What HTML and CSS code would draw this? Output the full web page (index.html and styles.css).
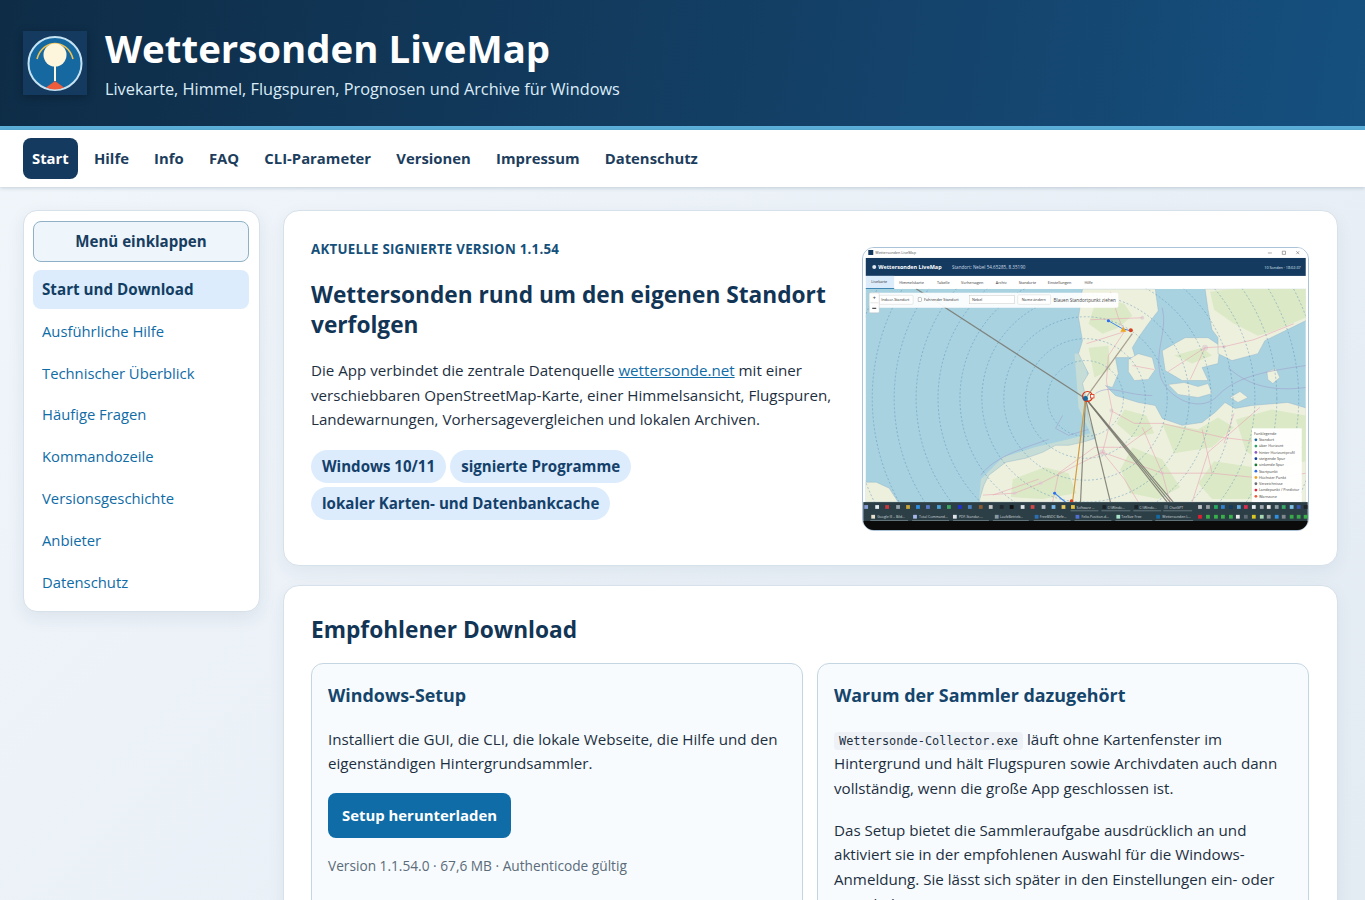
FILE: index.html
```html
<!DOCTYPE html>
<html lang="de">
<head>
    <meta charset="UTF-8">
    <title>Wettersonden LiveMap</title>
    <link rel="stylesheet" href="styles.css">
</head>
<body>

    <!-- Page Header -->
    <header class="page-header">
        <svg class="logo" viewBox="0 0 64 64" aria-label="Logo">
            <rect width="64" height="64" fill="#143a5f"/>
            <circle cx="32" cy="32.500" r="26.500" fill="#1569a0" stroke="#c4e2f2" stroke-width="2"/>
            <path d="M14 28 C17 17 25 12.500 32 12.500 C39 12.500 47 17 50 28" fill="none" stroke="#f2c14e" stroke-width="1.600"/>
            <circle cx="32" cy="24" r="11.500" fill="#fdf6dc"/>
            <rect x="31" y="34" width="2" height="16" fill="#fdf6dc"/>
            <path d="M23 56.500 L32 50 L41 56.500 C35 59 29 59 23 56.500 Z" fill="#ee5c3c"/>
        </svg>
        <div>
            <h1>Wettersonden LiveMap</h1>
            <p>Livekarte, Himmel, Flugspuren, Prognosen und Archive für Windows</p>
        </div>
    </header>

    <!-- Top Navigation -->
    <nav class="top-nav">
        <a class="active" href="#">Start</a>
        <a href="#">Hilfe</a>
        <a href="#">Info</a>
        <a href="#">FAQ</a>
        <a href="#">CLI-Parameter</a>
        <a href="#">Versionen</a>
        <a href="#">Impressum</a>
        <a href="#">Datenschutz</a>
    </nav>

    <div class="layout">

        <!-- Side Menu -->
        <aside class="side-menu">
            <button class="collapse-btn">Menü einklappen</button>
            <a class="active" href="#">Start und Download</a>
            <a href="#">Ausführliche Hilfe</a>
            <a href="#">Technischer Überblick</a>
            <a href="#">Häufige Fragen</a>
            <a href="#">Kommandozeile</a>
            <a href="#">Versionsgeschichte</a>
            <a href="#">Anbieter</a>
            <a href="#">Datenschutz</a>
        </aside>

        <main class="content">

            <!-- Intro -->
            <section class="card hero">
                <div>
                    <div class="eyebrow">AKTUELLE SIGNIERTE VERSION 1.1.54</div>
                    <h2 class="hero-title">Wettersonden rund um den eigenen Standort verfolgen</h2>
                    <p>Die App verbindet die zentrale Datenquelle <a href="#">wettersonde.net</a> mit einer verschiebbaren OpenStreetMap-Karte, einer Himmelsansicht, Flugspuren, Landewarnungen, Vorhersagevergleichen und lokalen Archiven.</p>
                    <div class="pills">
                        <span>Windows 10/11</span>
                        <span>signierte Programme</span>
                        <span>lokaler Karten- und Datenbankcache</span>
                    </div>
                </div>

                <svg class="shot" viewBox="0 0 446 283" aria-label="Programmfenster mit Karte">
                    <rect width="446" height="283" fill="#fff"/>
                    <!-- title bar -->
                    <rect x="5" y="2" width="5" height="5" fill="#143a5f"/>
                    <text x="12" y="6.200" class="t4" fill="#555">Wettersonden LiveMap</text>
                    <path d="M406 5h4M420.500 3.200h3.200v3.200h-3.200zM434.500 3.200l3 3M437.500 3.200l-3 3" fill="none" stroke="#555" stroke-width=".5"/>
                    <!-- app header -->
                    <rect x="2.500" y="10" width="441.500" height="18" fill="#143a5f"/>
                    <circle cx="11" cy="19" r="2" fill="#dfe8f0"/>
                    <text x="15" y="21" class="t6b" fill="#fff">Wettersonden LiveMap</text>
                    <text x="89" y="21" class="t45" fill="#c9d8e4">Standort: Nebel 54.65285, 8.35190</text>
                    <text x="439" y="21" class="t4" fill="#dfe8f0" text-anchor="end">10 Sonden · 18:02:37</text>
                    <!-- tabs -->
                    <rect x="2.500" y="28" width="28.500" height="13" fill="#dcecfb"/>
                    <rect x="2.500" y="40.300" width="28.500" height=".8" fill="#1569a0"/>
                    <g class="t4" fill="#333">
                        <text x="8" y="35">Livekarte</text>
                        <text x="36" y="36">Himmelskarte</text>
                        <text x="74" y="36">Tabelle</text>
                        <text x="98" y="36">Vorhersagen</text>
                        <text x="133" y="36">Archiv</text>
                        <text x="156" y="36">Standorte</text>
                        <text x="185" y="36">Einstellungen</text>
                        <text x="222" y="36">Hilfe</text>
                    </g>
                    <!-- map -->
                    <svg x="2.500" y="41" width="441.500" height="214" viewBox="2.500 41 441.500 214">
                        <rect x="0" y="41" width="446" height="214" fill="#a9d2e0"/>
                        <!-- tidal flats -->
                        <path d="M116 255 L118 232 L140 210 L172 200 L206 192 L228 186 L216 160 L214 132 L212 106 L222 106 L232 190 L200 206 L150 222 L128 240 L124 255 Z" fill="#c5ddd6"/>
                        <!-- land -->
                        <g fill="#eef0de" stroke="#8eb0c8" stroke-width=".4">
                            <path d="M220 41 L293 41 L296 63 L286 76 L276 90 L270 100 L273 110 L253 110 L256 126 L250 140 L243 138 L253 148 L276 155 L293 158 L300 171 L320 178 L340 175 L353 165 L363 155 L373 161 L390 158 L426 155 L446 161 L446 255 L116 255 L121 238 L126 228 L143 215 L163 211 L180 205 L193 198 L206 198 L220 195 L233 191 L226 171 L223 148 L220 136 L226 126 L216 106 L220 93 L216 70 Z"/>
                            <path d="M266 112 L276 106 L290 110 L293 122 L286 132 L272 133 L266 124 Z"/>
                            <path d="M300 103 L323 90 L346 90 L358 98 L356 116 L340 120 L346 133 L320 133 L303 123 Z"/>
                            <path d="M306 137 L322 135 L336 139 L346 136 L350 146 L336 150 L316 147 Z"/>
                            <path d="M343 41 L446 41 L446 72 L403 93 L396 106 L370 113 L356 106 L356 90 L350 82 L346 62 Z"/>
                            <path d="M405 124 L414 121 L418 130 L411 136 L406 132 Z"/>
                            <path d="M2 255 L2 235 L13 235 L26 241 L35 255 Z"/>
                            <path d="M368 150 L378 144 L386 150 L376 155 Z"/>
                        </g>
                        <!-- woodland -->
                        <g fill="#dbe9c6">
                            <path d="M348 44 L372 41 L444 41 L444 70 L410 84 L396 88 L372 76 L352 62 Z"/>
                            <path d="M232 58 L246 52 L262 56 L270 68 L256 80 L240 86 L226 76 Z"/>
                            <path d="M226 100 L246 98 L248 122 L232 130 Z"/>
                            <path d="M300 176 L336 182 L356 170 L372 180 L350 200 L312 206 Z"/>
                            <path d="M374 172 L410 162 L444 168 L444 214 L412 222 L384 204 Z"/>
                            <path d="M352 214 L392 220 L420 232 L400 252 L350 252 L336 236 Z"/>
                            <path d="M270 200 L300 212 L318 240 L296 252 L268 246 L258 222 Z"/>
                            <path d="M150 232 L182 220 L206 226 L214 246 L180 252 L148 250 Z"/>
                            <path d="M262 162 L284 168 L292 186 L270 190 L254 176 Z"/>
                            <path d="M312 108 L340 100 L350 108 L330 116 Z"/>
                        </g>
                        <!-- towns -->
                        <g fill="#e0d8d4">
                            <circle cx="343" cy="100" r="3"/>
                            <circle cx="362" cy="99" r="1.800"/>
                            <circle cx="249" cy="163" r="2"/>
                            <circle cx="240" cy="205" r="3"/>
                            <circle cx="300" cy="226" r="2"/>
                            <circle cx="178" cy="236" r="2"/>
                            <circle cx="152" cy="246" r="2"/>
                            <circle cx="280" cy="70" r="2"/>
                            <circle cx="244" cy="120" r="1.500"/>
                            <circle cx="410" cy="232" r="2"/>
                        </g>
                        <!-- roads -->
                        <g fill="none" stroke="#e7a6b5" stroke-width=".6">
                            <path d="M248 44 L256 70 L262 84 L246 108 L244 134 L250 164 L244 190 L240 205 L262 232 L276 255"/>
                            <path d="M250 164 L272 176 L300 176 L360 190 L440 200"/>
                            <path d="M120 248 L152 246 L178 236 L240 205 L300 226 L350 226 L410 232 L444 226"/>
                            <path d="M190 255 L196 226 L232 200 L262 200 L290 180"/>
                            <path d="M270 118 L292 122 M306 124 L343 100 L362 99 M343 100 L328 132"/>
                            <path d="M330 255 L346 205 L398 160 M176 232 L130 248 M362 99 L392 92 L432 76"/>
                            <path d="M228 72 L280 70 M224 96 L262 84 M300 226 L308 255 M410 232 L404 255"/>
                            <path d="M362 196 L372 166 M280 180 L300 226 M340 182 L350 226"/>
                        </g>
                        <!-- sea boundaries -->
                        <g fill="none" stroke="#9ea3cc" stroke-width=".6">
                            <path d="M200 168 L193 181 L206 188 L226 182"/>
                            <path d="M300 60 C306 82 292 102 298 128 C304 150 336 166 354 150 C372 130 400 124 444 118"/>
                            <path d="M366 120 C378 130 398 146 444 140"/>
                            <path d="M233 146 C248 136 262 148 290 148"/>
                            <path d="M118 228 C132 208 170 198 186 192"/>
                        </g>
                        <!-- range rings -->
                        <g fill="none" stroke="#4f8db5" stroke-width=".45" stroke-dasharray="2 2">
                            <circle cx="223" cy="151" r="38"/>
                            <circle cx="223" cy="151" r="60"/>
                            <circle cx="223" cy="151" r="82"/>
                            <circle cx="223" cy="151" r="104"/>
                            <circle cx="223" cy="151" r="126"/>
                            <circle cx="223" cy="151" r="148"/>
                            <circle cx="223" cy="151" r="170"/>
                            <circle cx="223" cy="151" r="192"/>
                            <circle cx="223" cy="151" r="214"/>
                            <circle cx="223" cy="151" r="236"/>
                        </g>
                        <!-- bearing lines -->
                        <g fill="none" stroke="#77766c" stroke-width="1.200" stroke-opacity=".85">
                            <path d="M53 41 L223 151"/>
                            <path d="M270 86 L223 151" stroke="#9c9280"/>
                            <path d="M223 151 L218 255"/>
                            <path d="M223 151 L248 255"/>
                            <path d="M223 151 L305 255"/>
                            <path d="M223 151 L308 255"/>
                            <path d="M223 151 L311 255"/>
                        </g>
                        <path d="M223 151 L210 255" fill="none" stroke="#d49b3f" stroke-width="1.200"/>
                        <!-- tracks and markers -->
                        <path d="M246 73 L260 81 L268 83" fill="none" stroke="#3f86f0" stroke-width="1"/>
                        <circle cx="246" cy="73" r="1.600" fill="#2f6fee"/>
                        <path d="M258 84 L261 79 L264 84 Z" fill="#f0a41b"/>
                        <circle cx="268.500" cy="82.500" r="2" fill="#d9401f"/>
                        <path d="M192 246 L204 256" fill="none" stroke="#3f86f0" stroke-width="1.200"/>
                        <circle cx="192" cy="246" r="1.500" fill="#2f6fee"/>
                        <circle cx="209" cy="254" r="1.800" fill="#d9401f"/>
                        <circle cx="225" cy="149" r="5" fill="none" stroke="#d9361a" stroke-width="1.200"/>
                        <rect x="228" y="147" width="3.500" height="3.500" fill="#fff" stroke="#d9361a" stroke-width=".8"/>
                        <circle cx="223" cy="151" r="2.500" fill="#1569a0"/>
                        <!-- toolbar -->
                        <rect x="6" y="45" width="250" height="15" rx="2" fill="#fff" fill-opacity=".93"/>
                        <rect x="16" y="47.500" width="34" height="9" rx="1" fill="#fff" stroke="#ccc" stroke-width=".4"/>
                        <text x="18" y="53.500" class="t4" fill="#333">Indoor-Standort</text>
                        <rect x="55" y="50" width="3.500" height="3.500" fill="#fff" stroke="#777" stroke-width=".4"/>
                        <text x="61" y="53.500" class="t4" fill="#333">Fahrender Standort</text>
                        <rect x="106.500" y="47.500" width="45" height="8.500" fill="#fff" stroke="#bbb" stroke-width=".4"/>
                        <text x="109" y="53.500" class="t4" fill="#333">Nebel</text>
                        <rect x="155" y="47" width="33" height="9.500" rx="1" fill="#fff" stroke="#ccc" stroke-width=".4"/>
                        <text x="159" y="53.500" class="t4" fill="#333">Name ändern</text>
                        <text x="191" y="53.800" class="t45" fill="#444">Blauen Standortpunkt ziehen</text>
                        <!-- zoom control -->
                        <rect x="6" y="45" width="10" height="20" rx="1" fill="#fff" stroke="#bbb" stroke-width=".4"/>
                        <path d="M7 55h8" stroke="#bbb" stroke-width=".4"/>
                        <text x="11" y="52" class="t6b" fill="#555" text-anchor="middle">+</text>
                        <path d="M9 60.500h4" stroke="#222" stroke-width="1"/>
                        <!-- legend -->
                        <rect x="390" y="181" width="50" height="76" fill="#fff" fill-opacity=".96"/>
                        <g class="t4" fill="#444">
                            <text x="392" y="187.500">Funklegende</text>
                            <text x="397" y="193.800">Standort</text>
                            <text x="397" y="200">über Horizont</text>
                            <text x="397" y="206.400">hinter Horizontprofil</text>
                            <text x="397" y="212.700">steigende Spur</text>
                            <text x="397" y="219">sinkende Spur</text>
                            <text x="397" y="225.300">Startpunkt</text>
                            <text x="397" y="231.600">Höchster Punkt</text>
                            <text x="397" y="238">Verzeichnisse</text>
                            <text x="397" y="244.200">Landepunkt / Predictor</text>
                            <text x="397" y="250.500">Warnzone</text>
                        </g>
                        <g>
                            <circle cx="394" cy="192.500" r="1.400" fill="#1569a0"/>
                            <circle cx="394" cy="198.800" r="1.400" fill="#2aa06a"/>
                            <circle cx="394" cy="205.100" r="1.400" fill="#8e5bc8"/>
                            <circle cx="394" cy="211.400" r="1.400" fill="#143f9e"/>
                            <circle cx="394" cy="217.700" r="1.400" fill="#1b7a35"/>
                            <circle cx="394" cy="224" r="1.400" fill="#2f6fee"/>
                            <circle cx="394" cy="230.300" r="1.400" fill="#f0a41b"/>
                            <circle cx="394" cy="236.600" r="1.400" fill="#6a6f76"/>
                            <circle cx="394" cy="242.900" r="1.400" fill="#e0273b"/>
                            <circle cx="394" cy="249.200" r="1.400" fill="#ee5c3c"/>
                        </g>
                    </svg>
                    <!-- taskbar -->
                    <rect y="255" width="446" height="28" fill="#2c3e46"/>
                    <rect y="274" width="446" height="9" fill="#0b0b0b"/>
                    <!-- taskbar, first row -->
                    <g class="row-a">
                        <rect x="1" fill="#8aa0d8"/><rect x="12" fill="#e8eef2"/><rect x="22" fill="#c8383c"/><rect x="33" fill="#9aa6ae"/>
                        <rect x="43" fill="#c9a63a"/><rect x="53" fill="#2f8fe0"/><rect x="63" fill="#5a7ac8"/><rect x="74" fill="#4aa0d8"/>
                        <rect x="84" fill="#3aa860"/><rect x="95" fill="#2030d0"/><rect x="105" fill="#4a80c0"/><rect x="116" fill="#8a5a30"/>
                        <rect x="126" fill="#c8c8c8"/><rect x="137" fill="#20282c"/><rect x="147" fill="#101010"/><rect x="158" fill="#e0e4e8"/>
                        <rect x="168" fill="#d04848"/><rect x="179" fill="#b8c4cc"/><rect x="189" fill="#78b8e8"/><rect x="199" fill="#e8c860"/>
                        <rect x="336" fill="#c0c4c8"/><rect x="344" fill="#9aa0a4"/><rect x="352" fill="#28a860"/><rect x="359" fill="#3080d0"/>
                        <rect x="367" fill="#143a5f"/><rect x="375" fill="#60a8e0"/><rect x="382" fill="#d83050"/><rect x="390" fill="#e8f0f4"/>
                        <rect x="398" fill="#a0a8b0"/><rect x="405" fill="#e8e8e8"/><rect x="413" fill="#90a0a8"/><rect x="420" fill="#38a868"/>
                        <rect x="428" fill="#80c0e8"/><rect x="435" fill="#3858b0"/><rect x="442" fill="#202428"/>
                    </g>
                    <!-- taskbar, second row -->
                    <g class="row-b">
                        <rect x="336" fill="#e02030"/><rect x="344" fill="#38b048"/><rect x="352" fill="#38b048"/><rect x="359" fill="#38b048"/>
                        <rect x="367" fill="#38b048"/><rect x="374" fill="#e8e8e8"/><rect x="382" fill="#606c74"/><rect x="390" fill="#d8c820"/>
                        <rect x="398" fill="#a8d8b0"/><rect x="405" fill="#889498"/><rect x="413" fill="#2f8fe0"/><rect x="420" fill="#808890"/>
                        <rect x="428" fill="#38a848"/><rect x="435" fill="#38a848"/><rect x="442" fill="#38b048"/>
                    </g>
                    <!-- taskbar, window buttons -->
                    <g class="t35" fill="#cfd8dc">
                        <text x="214" y="261.500">Software ...</text>
                        <text x="245" y="261.500">C:\Windo...</text>
                        <text x="277" y="261.500">C:\Windo...</text>
                        <text x="307" y="261.500">ChatGPT</text>
                        <text x="14" y="271.300">Google IE – Bild...</text>
                        <text x="56" y="271.300">Total Command...</text>
                        <text x="96" y="271.300">PDF-Standar-...</text>
                        <text x="137" y="271.300">LaufzBetrieb...</text>
                        <text x="177" y="271.300">FreeBSDC Befe...</text>
                        <text x="219" y="271.300">Felix-Position-d...</text>
                        <text x="259" y="271.300">TeeSize Free</text>
                        <text x="300" y="271.300">Wettersonden L...</text>
                    </g>
                    <g class="tile-icons">
                        <rect x="208.500" y="258" fill="#e8c040"/>
                        <rect x="240" y="258" fill="#1c2428"/>
                        <rect x="272" y="258" fill="#1c2428"/>
                        <rect x="302" y="258" fill="#56646c"/>
                        <rect x="8" y="267.800" fill="#e8e0c8"/>
                        <rect x="50" y="267.800" fill="#a8b8e8"/>
                        <rect x="90" y="267.800" fill="#e0e4e8"/>
                        <rect x="132" y="267.800" fill="#8898a0"/>
                        <rect x="172" y="267.800" fill="#2f6fb0"/>
                        <rect x="213" y="267.800" fill="#5070d0"/>
                        <rect x="254" y="267.800" fill="#a8e0c8"/>
                        <rect x="294" y="267.800" fill="#1569a0"/>
                    </g>
                    <g fill="#8a989e">
                        <rect x="208" y="263.500" width="28" height=".6"/>
                        <rect x="239" y="263.500" width="29" height=".6"/>
                        <rect x="271" y="263.500" width="28" height=".6"/>
                        <rect x="301" y="263.500" width="29" height=".6"/>
                        <rect x="7" y="273" width="38" height=".6"/>
                        <rect x="49" y="273" width="37" height=".6"/>
                        <rect x="90" y="273" width="36" height=".6"/>
                        <rect x="130" y="273" width="36" height=".6"/>
                        <rect x="171" y="273" width="37" height=".6"/>
                        <rect x="212" y="273" width="37" height=".6"/>
                        <rect x="253" y="273" width="37" height=".6"/>
                        <rect x="293" y="273" width="38" height=".6"/>
                    </g>
                </svg>
            </section>

            <!-- Download -->
            <section class="card download">
                <h2>Empfohlener Download</h2>
                <div class="download-grid">
                    <div class="panel">
                        <h3>Windows-Setup</h3>
                        <p>Installiert die GUI, die CLI, die lokale Webseite, die Hilfe und den eigenständigen Hintergrundsammler.</p>
                        <a class="btn" href="#">Setup herunterladen</a>
                        <p class="muted">Version 1.1.54.0 · 67,6 MB · Authenticode gültig</p>
                        <p class="muted">Der aktuelle SHA-256-Wert steht im signierten Update-Manifest.</p>
                    </div>
                    <div class="panel">
                        <h3>Warum der Sammler dazugehört</h3>
                        <p><code>Wettersonde-Collector.exe</code> läuft ohne Kartenfenster im Hintergrund und hält Flugspuren sowie Archivdaten auch dann vollständig, wenn die große App geschlossen ist.</p>
                        <p>Das Setup bietet die Sammleraufgabe ausdrücklich an und aktiviert sie in der empfohlenen Auswahl für die Windows-Anmeldung. Sie lässt sich später in den Einstellungen ein- oder ausschalten.</p>
                    </div>
                </div>
            </section>

        </main>
    </div>

</body>
</html>
```

FILE: styles.css
```css
* {
    box-sizing: border-box;
}

html, body {
    height: 900px;
    overflow: hidden;
}

body {
    margin: 0;
    font-family: "Open Sans", "Noto Sans", sans-serif;
    font-size: 15.150px;
    line-height: 24.700px;
    color: #1d2f3f;
    background: linear-gradient(135deg, #f1f6fb 0%, #e3ebf3 100%);
}

a {
    color: #0f6ca6;
    text-decoration: none;
}

/* Page Header */
.page-header {
    height: 130px;
    display: flex;
    align-items: center;
    gap: 18px;
    padding: 0 23px;
    color: #fff;
    background: linear-gradient(100deg, #0e2c46 0%, #14426a 65%, #15507f 100%);
    border-bottom: 4px solid #5bafd9;
}

.logo {
    width: 64px;
    height: 64px;
    box-shadow: 0 2px 8px rgba(0, 0, 0, 0.25);
}

.page-header h1 {
    margin: 0;
    font-size: 38.400px;
    line-height: 42px;
    font-weight: 700;
}

.page-header p {
    margin: 9px 0 0;
    font-size: 16.300px;
    line-height: 22px;
    color: #dcecf7;
}

/* Top Navigation */
.top-nav {
    height: 57px;
    display: flex;
    align-items: center;
    gap: 7.200px;
    padding: 0 23px;
    background: #fff;
    box-shadow: 0 1px 4px rgba(20, 50, 80, 0.2);
}

.top-nav a {
    padding: 8px 9px;
    border-radius: 8px;
    font-size: 14.850px;
    font-weight: 700;
    color: #1c3d5c;
}

.top-nav a.active {
    background: #143a5f;
    color: #fff;
}

/* Page Layout */
.layout {
    display: grid;
    grid-template-columns: 237px 1fr;
    gap: 23px;
    align-items: start;
    padding: 23px 27px 0 23px;
}

.side-menu {
    display: flex;
    flex-direction: column;
    padding: 10px 10px 7px 9px;
    background: #fff;
    border: 1px solid #d6e1ea;
    border-radius: 14px;
    box-shadow: 0 6px 18px rgba(20, 50, 80, 0.08);
}

.collapse-btn {
    height: 41px;
    margin-bottom: 8px;
    padding-bottom: 3px;
    background: #eef5fb;
    border: 1px solid #8fb0c6;
    border-radius: 8px;
    font: 700 15.100px "Open Sans", sans-serif;
    color: #173d60;
}

.side-menu a {
    height: 39px;
    margin-bottom: 2.800px;
    padding: 7px 9px;
    border-radius: 8px;
    font-size: 14.800px;
}

.side-menu a.active {
    background: #dcecfd;
    color: #123e63;
    font-weight: 700;
    font-size: 15.200px;
}

.content {
    display: flex;
    flex-direction: column;
    gap: 19px;
}

.card {
    padding: 28px 28px 28px 27px;
    background: #fff;
    border: 1px solid #d6e1ea;
    border-radius: 16px;
    box-shadow: 0 6px 18px rgba(20, 50, 80, 0.06);
}

.card h2 {
    margin: 0;
    font-size: 22.700px;
    line-height: 29.500px;
    color: #123556;
}

/* Intro */
.hero {
    display: grid;
    grid-template-columns: 1fr 447px;
    gap: 28px;
    padding-top: 27px;
    padding-bottom: 34px;
}

.eyebrow {
    font-size: 13.300px;
    line-height: 22px;
    font-weight: 700;
    letter-spacing: 0.25px;
    color: #14507a;
}

.card .hero-title {
    margin: 20px 0 19px;
}

.hero p {
    margin: 0 0 18px;
}

.hero p a {
    text-decoration: underline;
}

.pills {
    display: flex;
    flex-wrap: wrap;
    gap: 4px;
}

.pills span {
    padding: 4px 11px;
    border-radius: 17px;
    background: #dcecfd;
    color: #14406a;
    font-weight: 700;
    font-size: 15.100px;
}

.shot {
    display: block;
    width: 447px;
    height: 284px;
    margin-top: 9px;
    border: 1px solid #aac3d8;
    border-radius: 12px;
}

.t4 {
    font: 3.800px "Open Sans", sans-serif;
}

.t45 {
    font: 4.600px "Open Sans", sans-serif;
}

.t35 {
    font: 3.500px "Open Sans", sans-serif;
}

.t6b {
    font: 700 5.500px "Open Sans", sans-serif;
}

.row-a rect,
.row-b rect,
.tile-icons rect {
    width: 3.800px;
    height: 3.800px;
}

.row-a rect {
    y: 258px;
}

.row-b rect {
    y: 267.800px;
}

/* Download */
.download {
    padding-top: 29px;
}

.download-grid {
    display: grid;
    grid-template-columns: 1fr 1fr;
    gap: 14px;
    margin-top: 18px;
}

.panel {
    padding: 16px;
    background: #f7fbfe;
    border: 1px solid #c5d6e3;
    border-radius: 12px;
}

.panel h3 {
    margin: 3px 0 19px;
    font-size: 17.900px;
    line-height: 25px;
    color: #16456b;
}

.panel p {
    margin: 0 0 17px;
}

.btn {
    display: inline-block;
    padding: 10.200px 14px;
    border-radius: 8px;
    background: #0f6ca6;
    color: #fff;
    font-size: 14.900px;
    font-weight: 700;
}

.panel .muted {
    margin: 16px 0 14px;
    font-size: 13.700px;
    color: #5b6b79;
}

code {
    padding: 2px 5px;
    border-radius: 4px;
    background: #eef2f6;
    font: 11.900px "DejaVu Sans Mono", monospace;
}
```
